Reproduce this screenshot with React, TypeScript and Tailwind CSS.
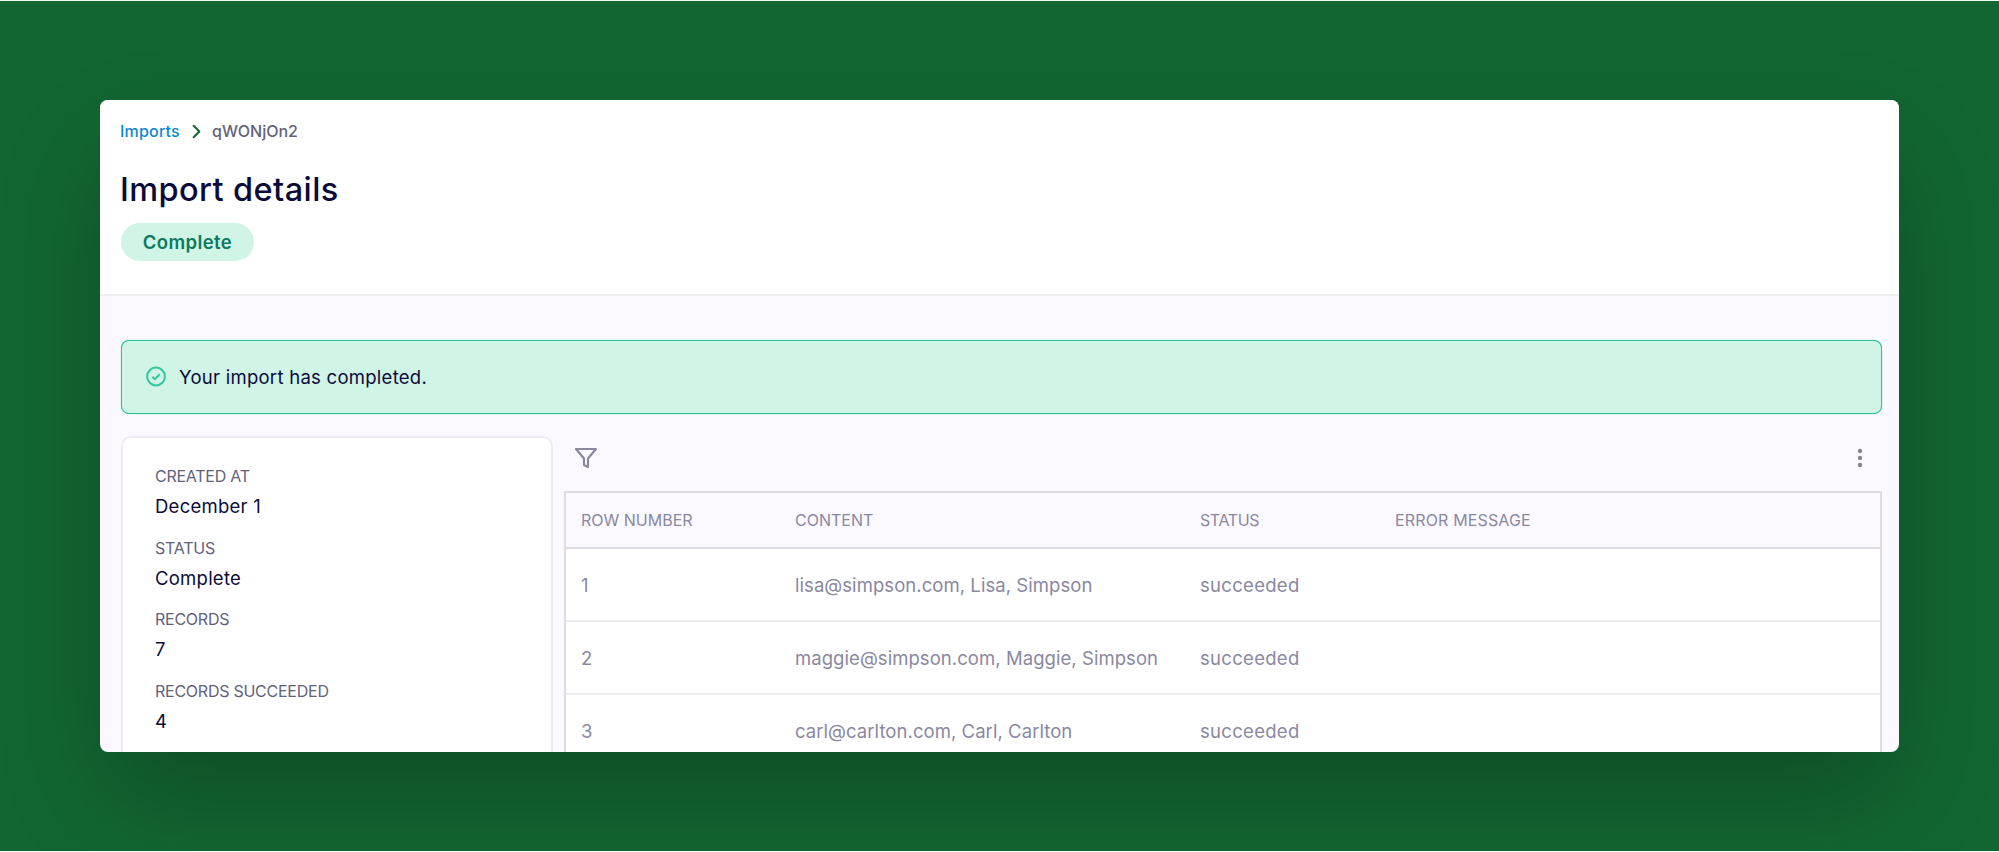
import React from 'react';
import { ChevronRight } from 'lucide-react';
import { FiFilter } from 'react-icons/fi';

interface ImportRow {
  id: number;
  content: string;
  status: string;
}

const details = [
  { label: 'Created at', value: 'December 1' },
  { label: 'Status', value: 'Complete' },
  { label: 'Records', value: '7' },
  { label: 'Records succeeded', value: '4' },
];

const rows: ImportRow[] = [
  { id: 1, content: 'lisa@simpson.com, Lisa, Simpson', status: 'succeeded' },
  { id: 2, content: 'maggie@simpson.com, Maggie, Simpson', status: 'succeeded' },
  { id: 3, content: 'carl@carlton.com, Carl, Carlton', status: 'succeeded' },
];

const PageHeader: React.FC = () => (
  <header className="h-[196px] shrink-0 border-b-2 border-[#eeedf1] bg-white pl-[20px] pt-[19px]">
    <nav className="flex h-6 items-center text-[16px] font-medium">
      <a className="w-[60px] tracking-[0.2px] text-[#0b86d4]">Imports</a>
      <ChevronRight className="mx-[5px] text-[#166534]" size={23} strokeWidth={2.1} />
      <span className="ml-[-1px] text-[#63627a]">qWONjOn2</span>
    </nav>
    <h1 className="mt-[26px] h-[42px] text-[32.5px] font-medium leading-[42px] tracking-[0.4px] text-[#0b0b3b]">
      Import details
    </h1>
    <span className="ml-px mt-[12px] flex h-[38px] w-[133px] items-center justify-center rounded-full bg-[#d0f4e6] pt-px text-[18.5px] font-semibold tracking-[0.4px] text-[#0b7a5f]">
      Complete
    </span>
  </header>
);

const DetailsPanel: React.FC = () => (
  <aside className="h-[400px] w-[432px] shrink-0 rounded-[10px] border-2 border-[#eeecf3] bg-white pl-[32px] pt-[26px]">
    {details.map((item) => (
      <div key={item.label} className="h-[71.6px]">
        <p className="h-6 text-[16px] uppercase leading-6 tracking-[-0.25px] text-[#63627a]">{item.label}</p>
        <p className="mt-[4px] h-7 text-[18.5px] leading-7 tracking-[0.25px] text-[#0b0b3b]">{item.value}</p>
      </div>
    ))}
  </aside>
);

const ImportTable: React.FC = () => (
  <div className="h-[400px] border-x-2 border-t-2 border-[#dddbe4] text-[#8a889f]">
    <div className="grid h-[56px] grid-cols-[214px_405px_195px_1fr] items-center border-b-2 border-[#dcdae2] pl-[15px] text-[16px] uppercase">
      <span>Row number</span>
      <span>Content</span>
      <span className="tracking-[-0.4px]">Status</span>
      <span className="tracking-[0.15px]">Error message</span>
    </div>
    {rows.map((row) => (
      <div
        key={row.id}
        className="grid h-[73px] grid-cols-[214px_405px_195px_1fr] items-center border-b-2 border-[#ecebf0] bg-white pl-[15px] pt-[3px] text-[18.5px]"
      >
        <span>{row.id}</span>
        <span className="tracking-[0.06px]">{row.content}</span>
        <span className="tracking-[0.3px]">{row.status}</span>
      </div>
    ))}
  </div>
);

export default function App() {
  return (
    <div className="flex h-[852px] w-[1999px] items-start overflow-hidden border-y border-[#f4f8f5] bg-[#126631] pl-[100px] pt-[99px] font-['Inter',sans-serif]">
      <main className="flex h-[652px] w-[1799px] flex-col overflow-hidden rounded-[8px] bg-[#fbf9ff] shadow-[0_50px_100px_-12px_rgba(0,0,0,0.25)]">
        <PageHeader />
        <div className="flex flex-col pl-[21px] pr-[17px] pt-[44px]">
          <div className="flex h-[74px] shrink-0 items-center rounded-[8px] border border-[#2fc09a] bg-[#d0f4e6] pl-[23px] shadow-[0_0_1px_#2fc09a]">
            <svg width="22" height="22" viewBox="0 0 22 22" fill="none" className="stroke-[#2fc79b] stroke-2">
              <circle cx="11" cy="10.5" r="8.9" />
              <path d="M7.4 10.8l2.5 2.3 4.8-4.9" />
            </svg>
            <p className="ml-[12px] pt-[2px] text-[18.5px] tracking-[0.27px] text-[#0b0b3b]">Your import has completed.</p>
          </div>
          <div className="mt-[22px] flex">
            <DetailsPanel />
            <section className="ml-[11px] flex-1">
              <div className="flex h-[55px] items-center justify-between pb-[12px] pl-[10px] pr-[18px]">
                <FiFilter className="text-[#8a889f]" size={24} strokeWidth={2.2} />
                <svg width="8" height="20" viewBox="0 0 8 20" className="fill-[#86848f]">
                  <circle cx="4" cy="3" r="2.2" />
                  <circle cx="4" cy="10" r="2.2" />
                  <circle cx="4" cy="17" r="2.2" />
                </svg>
              </div>
              <ImportTable />
            </section>
          </div>
        </div>
      </main>
    </div>
  );
}
